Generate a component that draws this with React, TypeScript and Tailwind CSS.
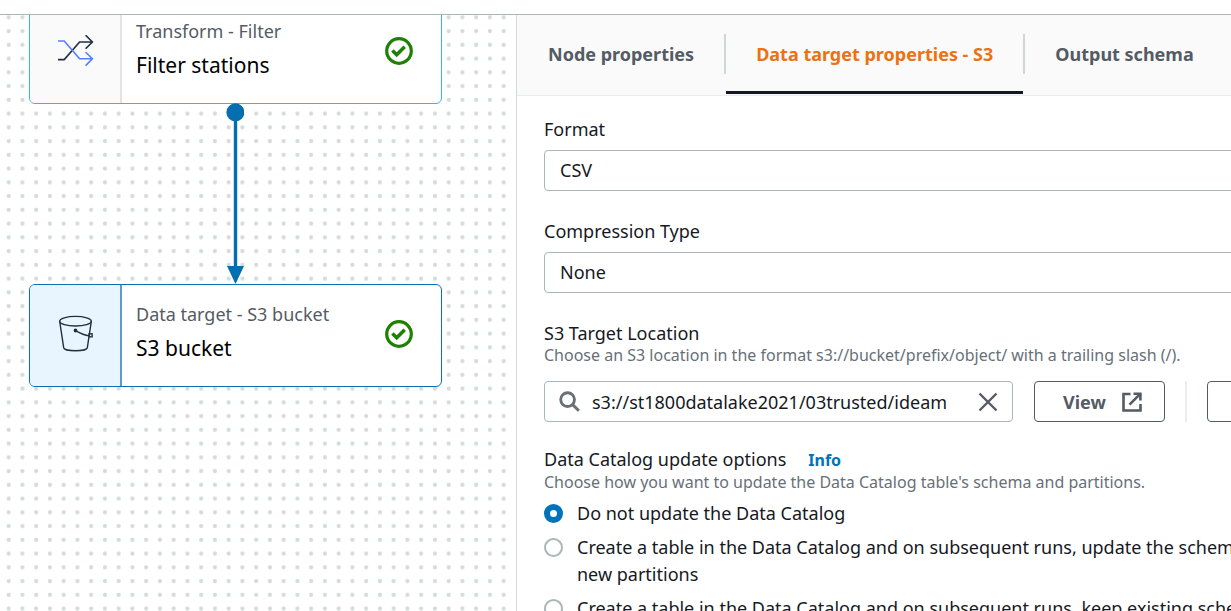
import React, { useState } from "react";

const CheckBadge = () => (
  <svg viewBox="0 0 28 28" className="size-7 shrink-0" fill="none" stroke="#1d8102" aria-hidden="true">
    <circle cx="14" cy="14" r="12.3" strokeWidth="3.2" />
    <path d="M7.400 13.400l4.300 4.300 8-8" strokeWidth="3.500" />
  </svg>
);

const ShuffleIcon = () => (
  <svg viewBox="0 0 36 32" className="h-8 w-9" fill="none" strokeWidth="1.6" aria-hidden="true">
    <path d="M0 24.6h6.2L21.6 7H34M27.6 .2L34.4 7l-6.8 6.8" stroke="#232f3e" />
    <path d="M0 6h6.2l15.4 17.8H34M27.6 17.2l6.8 6.600-6.800 6.800" stroke="#527fff" />
  </svg>
);

const BucketIcon = () => (
  <svg viewBox="0 0 36 38" className="h-[38px] w-9" fill="none" stroke="#232f3e" strokeWidth="1.4" aria-hidden="true">
    <ellipse cx="17.500" cy="6.2" rx="15.8" ry="4.8" />
    <path d="M1.7 6.4l4 26.4c.3 1.8 6 3 11.8 3s11.400-1.200 11.800-3l4-26.400" />
    <path d="M17.500 15.600c5 2.800 10 4.800 13.600 5.300" />
    <rect x="31.100" y="18.800" width="3" height="3" />
    <circle cx="17.500" cy="15.500" r="1.200" fill="#232f3e" />
  </svg>
);

const SearchIcon = () => (
  <svg viewBox="0 0 22 22" className="size-[21px] shrink-0" fill="none" stroke="#687078" strokeWidth="3" aria-hidden="true">
    <circle cx="9" cy="9" r="7.200" />
    <path d="M14 14l6.800 6.800" />
  </svg>
);

const CloseIcon = () => (
  <svg viewBox="0 0 20 20" className="size-5" fill="none" stroke="#545b64" strokeWidth="2.400" aria-hidden="true">
    <path d="M1.500 1.500l17 17M18.500 1.500l-17 17" />
  </svg>
);

const ExternalIcon = () => (
  <svg viewBox="0 0 20 20" className="size-5" fill="none" stroke="#545b64" strokeWidth="2.600" aria-hidden="true">
    <path d="M8.500 2H1.500v16.500h17V12" />
    <path d="M11.500 1.800h6.900V8.500M18 2.200L7.500 12.700" />
  </svg>
);

type NodeProps = {
  kind: string;
  name: string;
  icon: React.ReactNode;
  frame: string;
  cell: string;
};

const FlowNode = ({ kind, name, icon, frame, cell }: NodeProps) => (
  <article className={`absolute left-[29px] flex h-[103px] w-[413px] overflow-hidden rounded-md border bg-white ${frame}`}>
    <div className={`flex w-[92px] shrink-0 items-center justify-center border-r-2 pb-[3px] pl-0.5 ${cell}`}>{icon}</div>
    <div className="flex grow flex-col gap-2 pt-[17px] pl-3.5">
      <p className="text-lg leading-6 text-[#545b64]">{kind}</p>
      <h2 className="text-[21px] leading-7 text-black">{name}</h2>
    </div>
    <div className="flex items-center pr-7 pb-[3px]">
      <CheckBadge />
    </div>
  </article>
);

const Canvas = () => (
  <section aria-label="Job graph" className="relative w-[517px] shrink-0 overflow-hidden border-r border-[#d5dbdb] bg-white">
    <svg className="absolute inset-0 size-full" aria-hidden="true">
      <defs>
        <pattern id="dots" x="1.800" y="-4.500" width="13.750" height="13.750" patternUnits="userSpaceOnUse">
          <circle cx="6.870" cy="6.870" r="2.100" fill="#d5dbdb" />
        </pattern>
      </defs>
      <rect width="509" height="100%" fill="url(#dots)" />
    </svg>
    <FlowNode
      kind="Transform - Filter"
      name="Filter stations"
      icon={<ShuffleIcon />}
      frame="-top-3.5 border-[#38b0fb]"
      cell="border-[#e0e4e4] bg-[#fafafa]"
    />
    <FlowNode
      kind="Data target - S3 bucket"
      name="S3 bucket"
      icon={<BucketIcon />}
      frame="top-[269px] border-[#0a70b2]"
      cell="border-[#579fca] bg-[#e8f5fe]"
    />
    <svg viewBox="0 0 18 182" className="absolute top-[88px] left-[226px] h-[182px] w-[18px]" fill="#046fb0" aria-hidden="true">
      <circle cx="9.400" cy="9.300" r="9" />
      <path d="M7.800 9h3.400v154H7.800zM1 163h17l-8.500 18z" />
    </svg>
  </section>
);

const tabs = ["Node properties", "Data target properties - S3", "Output schema"];

const Tabs = () => {
  const [active, setActive] = useState(1);
  return (
    <div role="tablist" className="flex h-[81px] shrink-0 border-b border-[#eaeded] bg-[#fafafa] pl-px">
      {tabs.map((tab, i) => (
        <div key={tab} className="flex h-[79px] shrink-0 items-start">
          {i > 0 && <span className="mt-[19px] h-10 w-0.5 bg-[#d0d6d7]" />}
          <button
            role="tab"
            aria-selected={i === active}
            onClick={() => setActive(i)}
            className={`h-full border-b-[3px] px-[30px] pt-0.5 text-lg font-bold whitespace-nowrap ${
              i === active ? "border-[#16191f] text-[#ec7211]" : "border-transparent text-[#545b64]"
            }`}
          >
            {tab}
          </button>
        </div>
      ))}
    </div>
  );
};

const fieldBox = "h-[41px] rounded-sm border border-[#aab7b8] bg-white";
const buttonBox = "flex h-[41px] shrink-0 items-center gap-4 rounded-sm border border-[#545b64] bg-white text-lg font-bold text-[#545b64]";

const SelectField = ({ id, label, options }: { id: string; label: string; options: string[] }) => (
  <div className="flex flex-col gap-[9px]">
    <label htmlFor={id} className="leading-6">
      {label}
    </label>
    <select id={id} className={`${fieldBox} w-full appearance-none px-[15px] pb-0.5`}>
      {options.map((o) => (
        <option key={o}>{o}</option>
      ))}
    </select>
  </div>
);

const updateOptions = [
  "Do not update the Data Catalog",
  "Create a table in the Data Catalog and on subsequent runs, update the schema and add new partitions",
  "Create a table in the Data Catalog and on subsequent runs, keep existing schema and add new partitions",
];

const TargetForm = () => {
  const [choice, setChoice] = useState(0);
  const [path, setPath] = useState("s3://st1800datalake2021/03trusted/ideam");
  return (
    <form className="flex min-w-[830px] flex-col gap-7 pt-[21px] pl-[27px] text-lg text-[#16191f]">
      <SelectField id="format" label="Format" options={["CSV", "JSON", "Parquet"]} />
      <SelectField id="compression" label="Compression Type" options={["None", "gzip", "bzip2"]} />
      <div>
        <label htmlFor="location" className="block leading-6">
          S3 Target Location
        </label>
        <p className="text-base leading-5 text-[#687078]">
          Choose an S3 location in the format s3://bucket/prefix/object/ with a trailing slash (/).
        </p>
        <div className="mt-4 flex">
          <div className={`${fieldBox} flex w-[469px] shrink-0 items-center px-3.5`}>
            <SearchIcon />
            <input
              id="location"
              value={path}
              onChange={(e) => setPath(e.target.value)}
              className="ml-3 min-w-0 grow bg-transparent outline-none"
            />
            <button type="button" aria-label="Clear" className="ml-3">
              <CloseIcon />
            </button>
          </div>
          <button type="button" className={`${buttonBox} ml-[21px] pr-[22px] pl-7`}>
            View <ExternalIcon />
          </button>
          <span className="mx-5 w-0.5 shrink-0 bg-[#eaeded]" />
          <button type="button" className={`${buttonBox} px-7`}>
            Browse S3
          </button>
        </div>
        <fieldset className="mt-[25px]">
          <legend className="leading-6">
            Data Catalog update options
            <a href="#info" className="ml-[22px] text-base font-bold text-[#0073bb]">
              Info
            </a>
          </legend>
          <p className="text-base leading-5 text-[#687078]">
            Choose how you want to update the Data Catalog table's schema and partitions.
          </p>
          <div className="mt-2 flex flex-col gap-[7px]">
            {updateOptions.map((text, i) => (
              <label key={text} className="flex gap-3.5 leading-[27px]">
                <input
                  type="radio"
                  name="update"
                  checked={choice === i}
                  onChange={() => setChoice(i)}
                  className="mt-1 size-[19px] shrink-0 appearance-none rounded-full border-2 border-[#aab7b8] bg-white checked:border-[6px] checked:border-[#0073bb]"
                />
                {text}
              </label>
            ))}
          </div>
        </fieldset>
      </div>
    </form>
  );
};

export default function App() {
  return (
    <div className="flex h-screen flex-col overflow-hidden bg-white font-['Noto_Sans',sans-serif]">
      <header className="h-[15px] shrink-0 border-b border-[#aab7b8]" />
      <main className="flex min-h-0 grow">
        <Canvas />
        <section aria-label="Properties" className="min-w-0 grow overflow-hidden">
          <Tabs />
          <TargetForm />
        </section>
      </main>
    </div>
  );
}
